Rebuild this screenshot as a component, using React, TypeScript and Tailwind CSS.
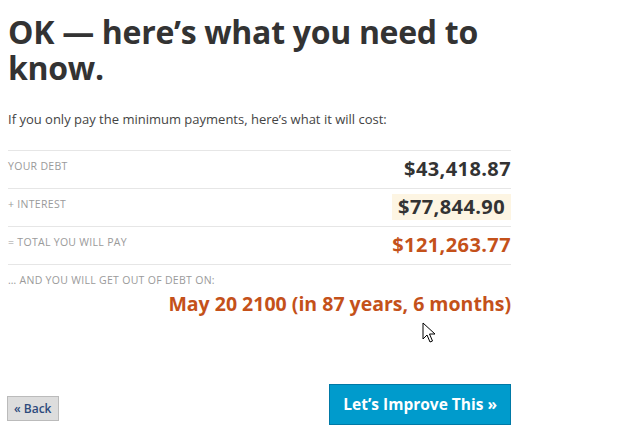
import React from 'react';

// Debt payoff summary: minimum-payment cost breakdown with navigation buttons.

const ROWS: { label: string; value: string; tone: 'dark' | 'highlight' | 'orange' }[] = [
  { label: 'Your Debt', value: '$43,418.87', tone: 'dark' },
  { label: '+ Interest', value: '$77,844.90', tone: 'highlight' },
  { label: '= Total You Will Pay', value: '$121,263.77', tone: 'orange' },
];

function Cursor() {
  return (
    <svg
      className="absolute left-[422px] top-[322px]"
      width="14"
      height="22"
      viewBox="0 0 14 22"
    >
      <path
        d="M1 1 L1 17 L5 13 L8 20 L10.5 19 L7.5 12 L13 12 Z"
        fill="#fff"
        stroke="#000"
        strokeWidth="1"
        strokeLinejoin="round"
      />
    </svg>
  );
}

export default function App() {
  return (
    <div
      className="relative min-h-[443px] w-[640px] bg-white text-[#333]"
      style={{ fontFamily: '"Open Sans", "Noto Sans", sans-serif' }}
    >
      <div className="w-[511px] pl-2 pt-[14px]">
        <h1 className="text-[32px] font-bold leading-[36px] tracking-[-0.3px] text-[#333]">
          OK — here’s what you need to know.
        </h1>

        <p className="mt-[24px] text-[13px] text-[#444]">
          If you only pay the minimum payments, here’s what it will cost:
        </p>

        <div className="mt-[20px] border-t border-[#e6e6e6]">
          {ROWS.map((r) => (
            <div
              key={r.label}
              className="flex h-[38px] items-start justify-between border-b border-[#e6e6e6]"
            >
              <span className="pt-[8px] text-[10.5px] uppercase tracking-[0.3px] text-[#9a9a9a]">
                {r.label}
              </span>
              <span
                className={
                  r.tone === 'highlight'
                    ? 'mt-[5px] bg-[#fdf5e3] px-[6px] py-[1px] text-[20px] font-bold leading-[24px] tracking-[0.4px]'
                    : r.tone === 'orange'
                      ? 'mt-[6px] text-[20px] font-bold leading-[24px] tracking-[0.4px] text-[#c4511a]'
                      : 'mt-[6px] text-[20px] font-bold leading-[24px] tracking-[0.4px] text-[#333]'
                }
              >
                {r.value}
              </span>
            </div>
          ))}

          <div className="pt-[8px]">
            <div className="text-[10.5px] uppercase tracking-[0.3px] text-[#9a9a9a]">
              … and you will get out of debt on:
            </div>
            <div className="mt-[4px] text-right text-[19.5px] font-bold leading-[24px] text-[#c4511a]">
              May 20 2100 (in 87 years, 6 months)
            </div>
          </div>
        </div>

        <div className="mt-[68px] flex items-center justify-between">
          <button className="ml-[-1px] mt-[8px] border border-[#bbb] bg-[#ddd] px-[6px] py-[4px] text-[12px] font-semibold leading-[15px] text-[#2d4a7c]">
            « Back
          </button>
          <button className="border border-[#0079a6] bg-[#009bcc] px-[13px] py-[9px] text-[15.5px] font-bold leading-[21px] text-white">
            Let’s Improve This »
          </button>
        </div>
      </div>
      <Cursor />
    </div>
  );
}
